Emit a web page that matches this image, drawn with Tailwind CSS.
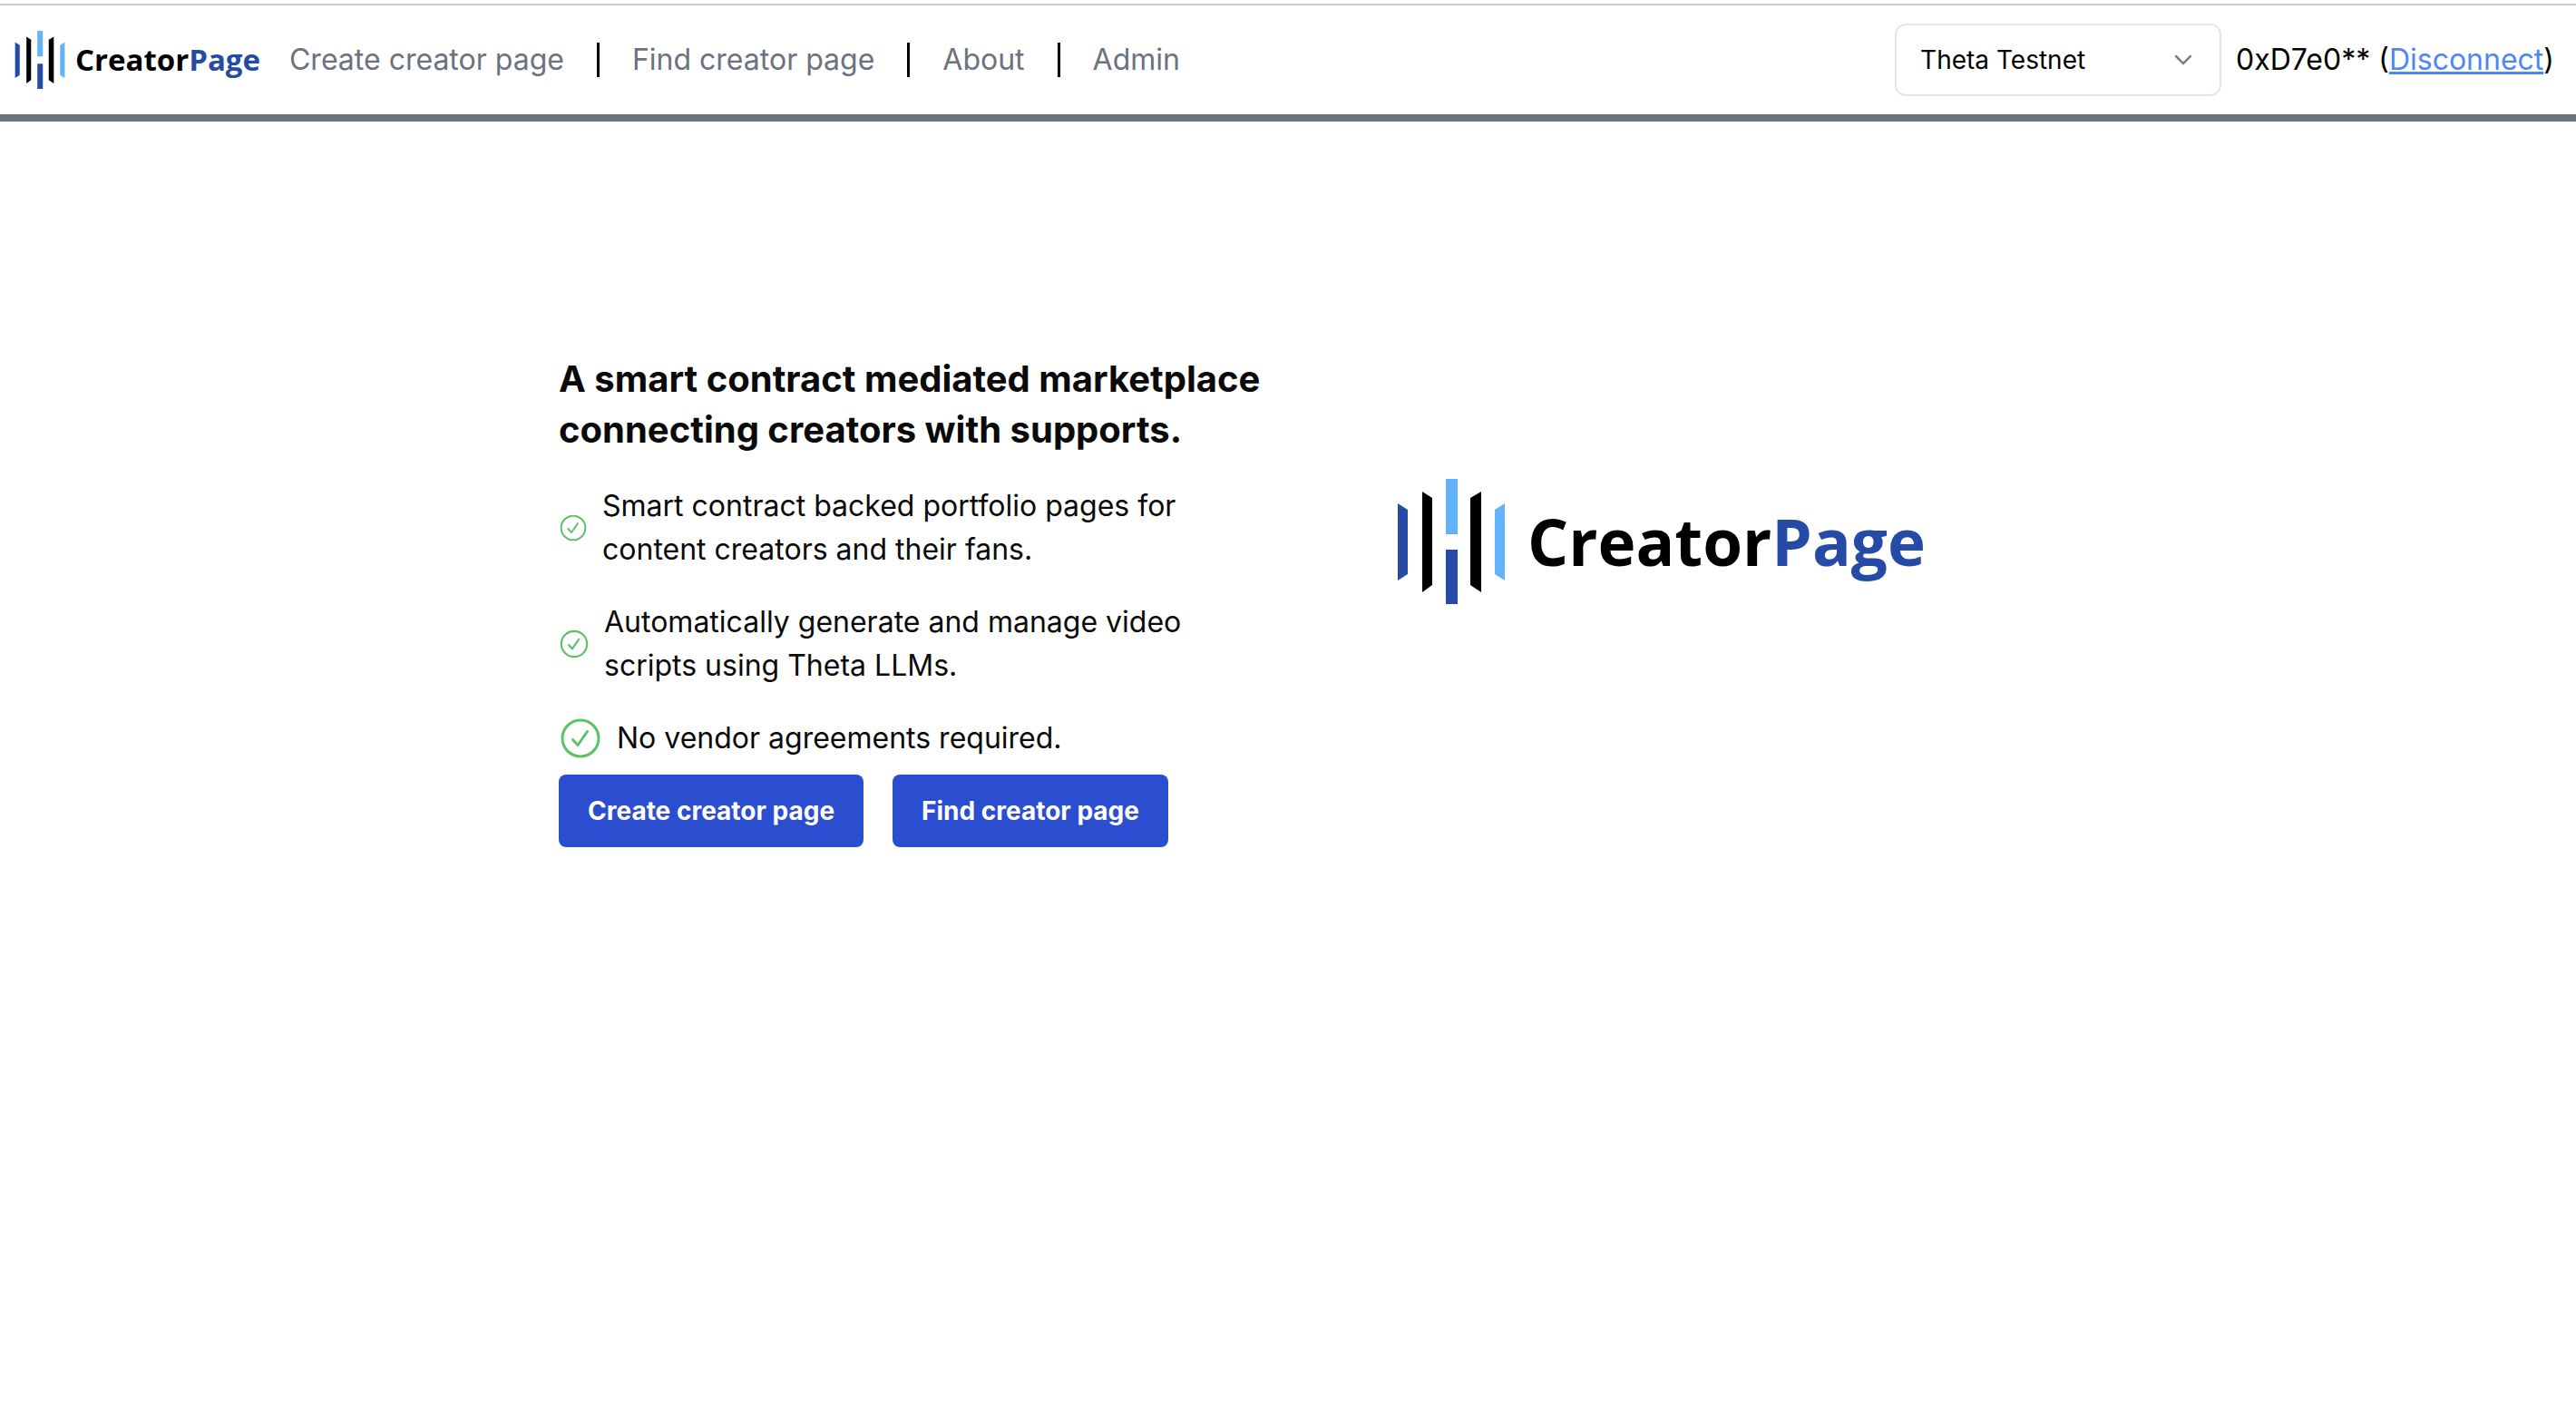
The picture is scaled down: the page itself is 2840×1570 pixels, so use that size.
<!DOCTYPE html>
<html lang="en">
<head>
<meta charset="utf-8">
<title>CreatorPage</title>
<script src="https://cdn.jsdelivr.net/npm/@tailwindcss/browser@4"></script>
</head>
<body class="min-h-screen bg-white font-['Inter',sans-serif] text-[32px] leading-[48px] text-black">
<svg class="hidden" aria-hidden="true">
  <symbol id="mark" viewBox="0 0 120 138">
    <path fill="#264ba6" d="M1 27l11 7v71l-11 7zM54 78h13v60H54z"/>
    <path fill="#000" d="M28 14l11 7v96l-11 8zM93 14l-12 7v96l12 8z"/>
    <path fill="#62b3fa" d="M54 0h13v61H54zM119 27l-11 7v71l11 7z"/>
  </symbol>
  <symbol id="check" viewBox="0 0 48 48">
    <circle cx="24" cy="24" r="20" fill="none" stroke="#5bc267" stroke-width="3"/>
    <path d="M15.500 25.500l5.500 6 10.500-15" fill="none" stroke="#5bc267" stroke-width="3" stroke-linecap="round" stroke-linejoin="round"/>
  </symbol>
</svg>
<header class="mt-1 flex items-center justify-between border-t-2 border-b-8 border-t-[#cccccc] border-b-[#6b7280] py-5 pr-6 pl-4">
  <div class="flex items-center">
    <a href="#" class="mr-8 flex items-center gap-[11px] text-[33px] font-bold">
      <svg class="h-16 w-14"><use href="#mark"/></svg>
      <span class="font-['Open_Sans',sans-serif]">Creator<span class="text-[#264ba6]">Page</span></span>
    </a>
    <nav class="flex items-center gap-9 text-[#6b7280]">
      <a href="#">Create creator page</a>
      <span class="h-[38px] w-[3px] bg-black"></span>
      <a href="#">Find creator page</a>
      <span class="h-[38px] w-[3px] bg-black"></span>
      <a href="#">About</a>
      <span class="h-[38px] w-[3px] bg-black"></span>
      <a href="#">Admin</a>
    </nav>
  </div>
  <div class="flex items-center gap-4">
    <div class="relative">
      <select aria-label="Network" class="h-20 w-[360px] appearance-none rounded-xl border-2 border-[#e5e5e5] bg-white pl-[26px] text-[28px]"><option>Theta Testnet</option></select>
      <svg class="pointer-events-none absolute top-[30px] right-8 h-5 w-5" viewBox="0 0 20 20" fill="none" stroke="#808080" stroke-width="2.500" stroke-linecap="round"><path d="M2 6l8 8 8-8"/></svg>
    </div>
    <p>0xD7e0** (<a href="#" class="text-[#4f86f7] underline">Disconnect</a>)</p>
  </div>
</header>
<main class="mx-auto grid w-[1608px] max-w-full grid-cols-2 pt-[256px]">
  <section>
    <h1 class="text-[40px] leading-[56px] font-bold text-[#0a0a0a]">A smart contract mediated marketplace<br>connecting creators with supports.</h1>
    <ul class="mt-8 flex flex-col gap-8 text-[#0a0a0a]">
      <li class="flex items-center gap-4"><svg class="h-8 w-8"><use href="#check"/></svg><span>Smart contract backed portfolio pages for<br>content creators and their fans.</span></li>
      <li class="flex items-center gap-4"><svg class="h-[34px] w-[34px]"><use href="#check"/></svg><span>Automatically generate and manage video<br>scripts using Theta LLMs.</span></li>
      <li class="flex items-center gap-4"><svg class="h-12 w-12"><use href="#check"/></svg><span>No vendor agreements required.</span></li>
    </ul>
    <div class="mt-4 flex gap-8">
      <button class="h-20 rounded-lg bg-[#2b4dd0] px-8 text-[28px] font-bold text-white">Create creator page</button>
      <button class="h-20 rounded-lg bg-[#2b4dd0] px-8 text-[28px] font-bold text-white">Find creator page</button>
    </div>
  </section>
  <div class="flex items-center gap-6 self-start pt-[138px] pl-[120px]">
    <svg class="h-[138px] w-[120px]"><use href="#mark"/></svg>
    <span class="font-['Open_Sans',sans-serif] text-[71px] font-bold">Creator<span class="text-[#264ba6]">Page</span></span>
  </div>
</main>
</body>
</html>
